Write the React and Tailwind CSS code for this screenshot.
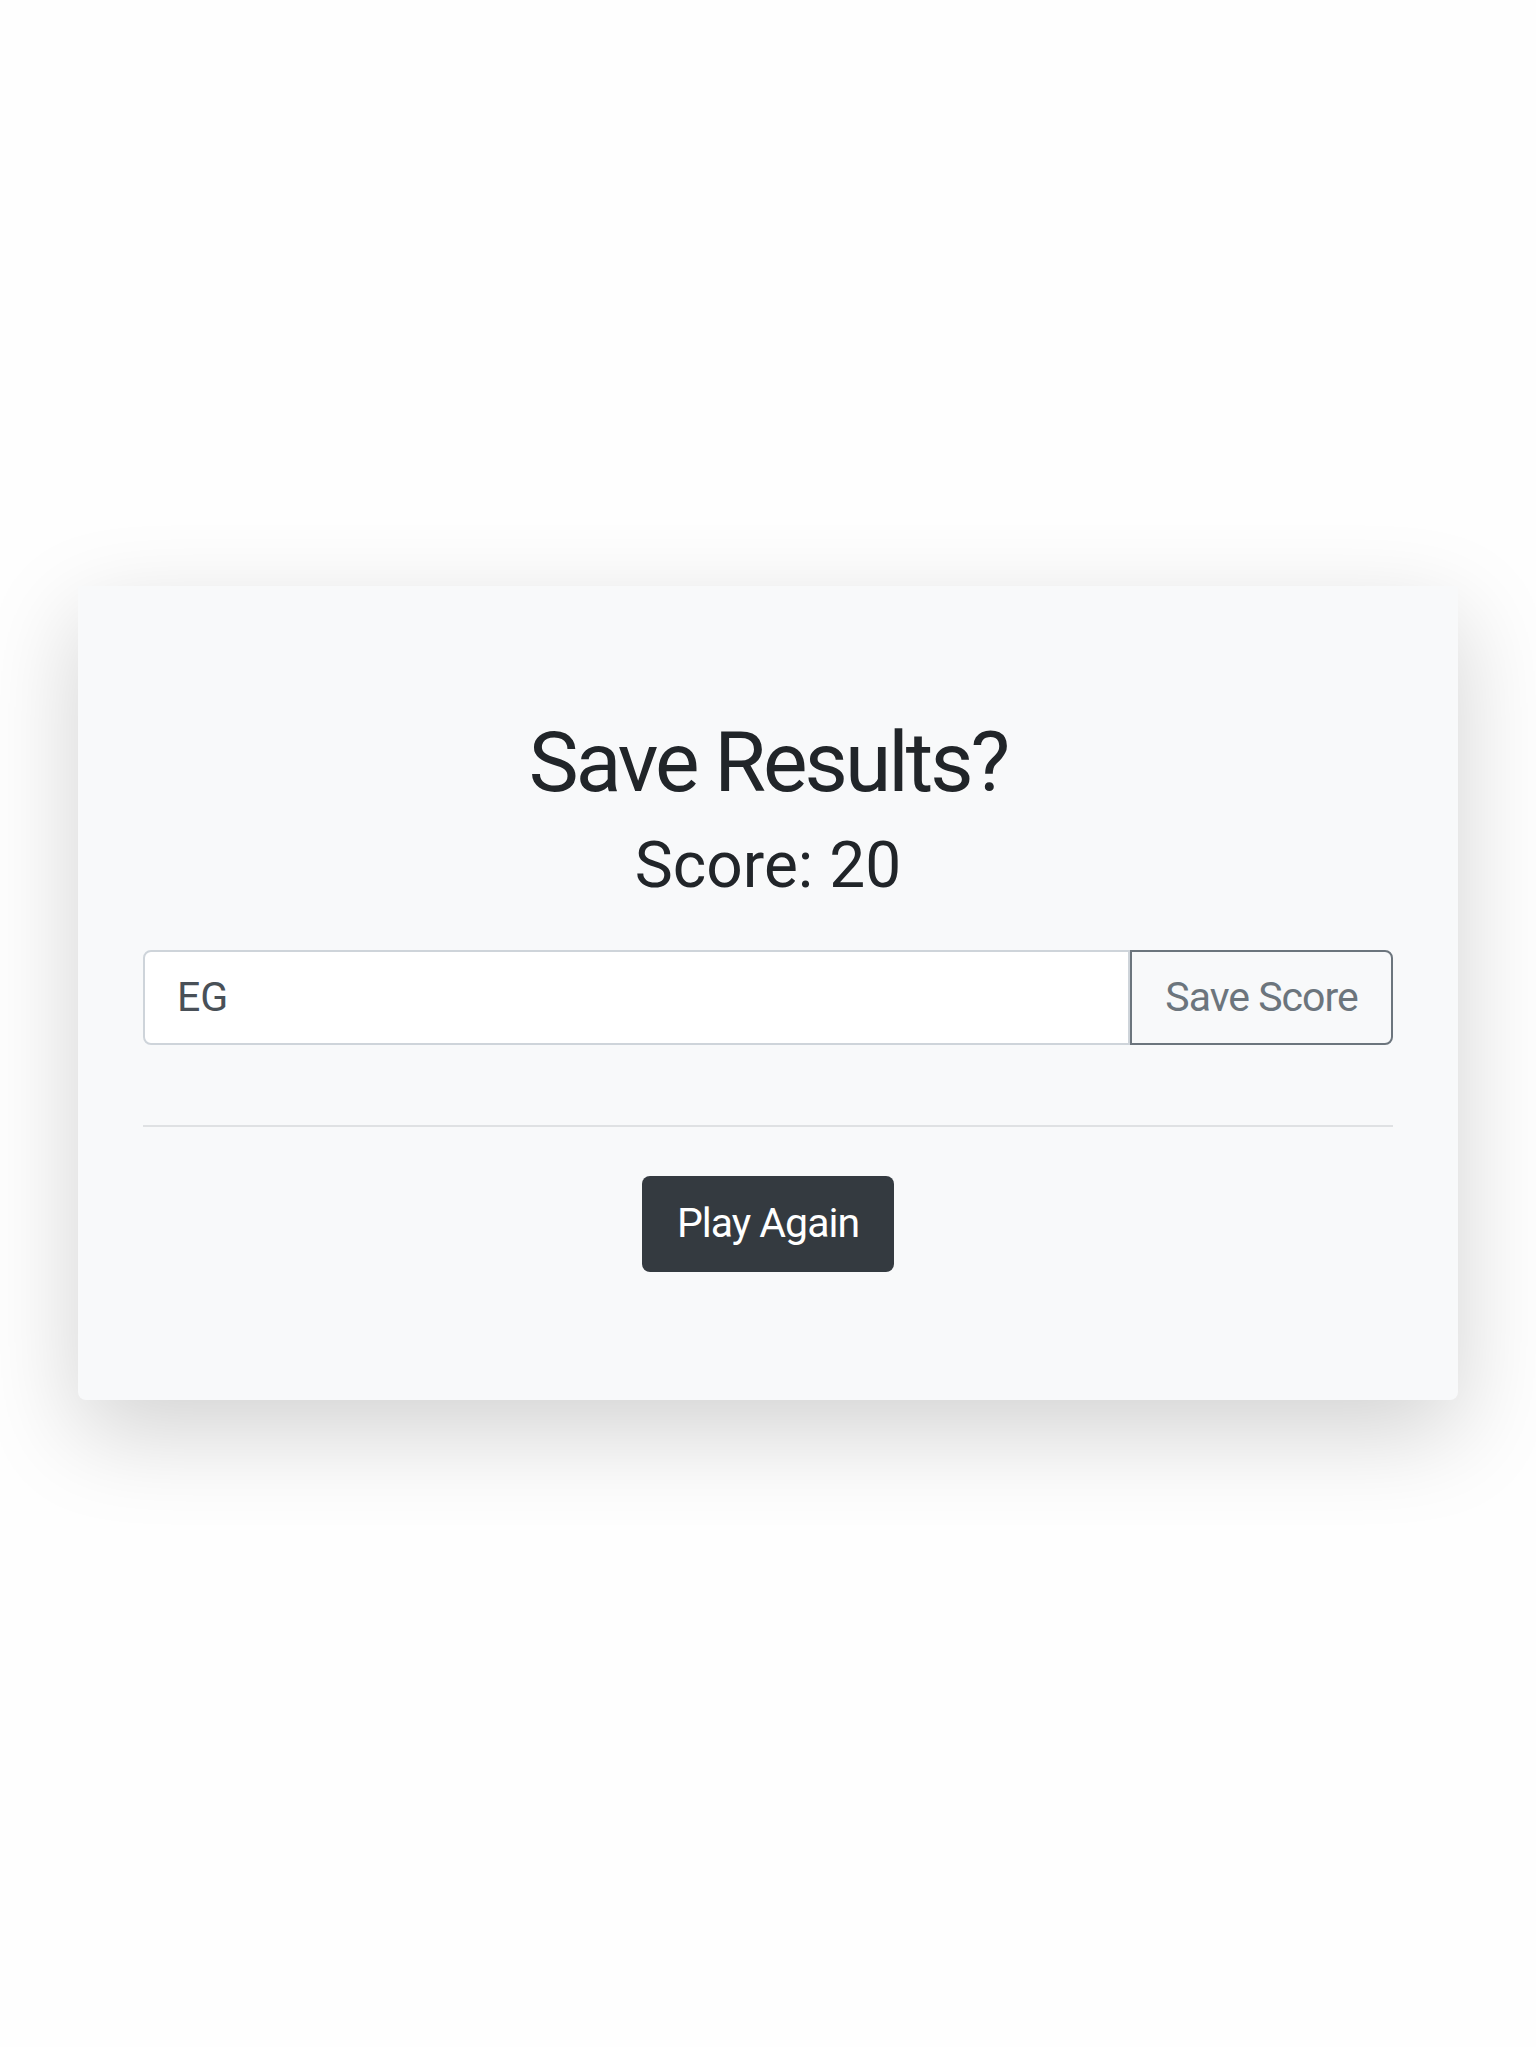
export default function App() {
  return (
    <div className="min-h-[2047px] bg-[#fefefe] pt-[586px] px-[78px]" style={{ fontFamily: "Roboto, 'Noto Sans', sans-serif" }}>
      <div className="bg-[#f8f9fa] rounded-b-[8px] shadow-[0_32px_96px_rgba(0,0,0,0.175)] px-[65px] pt-[128px] pb-[128px]">
        <h1 className="text-center text-[84px] leading-[98px] tracking-[-3px] text-[#212529] font-normal">Save Results?</h1>
        <h2 className="mt-[16px] text-center text-[64px] leading-[76px] text-[#212529] font-normal">Score: 20</h2>
        <div className="mt-[46px] flex h-[95px]">
          <div className="flex-1 flex items-center bg-white border-2 border-[#ced4da] rounded-l-[8px] pl-[32px] text-[41px] text-[#495057]">EG</div>
          <div className="w-[263px] flex items-center justify-center border-2 border-[#6c757d] rounded-r-[8px] text-[41px] tracking-[-1px] text-[#6c757d]">Save Score</div>
        </div>
        <div className="mt-[80px] h-[2px] bg-[#dfe1e3]"></div>
        <div className="mt-[49px] flex justify-center">
          <div className="w-[252px] h-[96px] flex items-center justify-center bg-[#343a40] rounded-[8px] text-white text-[41px] tracking-[-1px]">Play Again</div>
        </div>
      </div>
    </div>
  );
}
